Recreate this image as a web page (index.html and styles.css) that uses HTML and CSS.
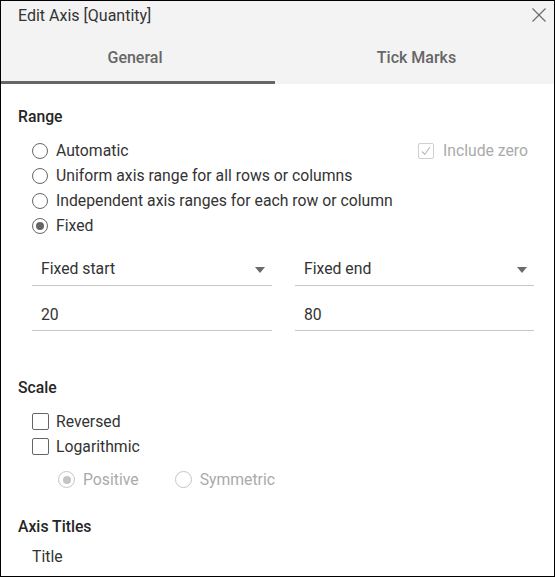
FILE: index.html
```html
<!DOCTYPE html>
<html>
<head>
<meta charset="utf-8">
<link rel="stylesheet" href="styles.css">
</head>
<body>
<div class="dialog">
  <div class="header">
    <div class="titlebar">
      <span class="title">Edit Axis [Quantity]</span>
      <svg class="close" width="14" height="14" viewBox="0 0 14 14"><path d="M0.5 0.5 L13.5 13.5 M13.5 0.5 L0.5 13.5" stroke="#6b6b6b" stroke-width="1.2" fill="none"/></svg>
    </div>
    <div class="tabs">
      <div class="tab active">General</div>
      <div class="tab second">Tick Marks</div>
    </div>
  </div>
  <div class="content">
    <div class="heading range-h">Range</div>
    <div class="range-top">
      <div class="options">
        <div class="opt"><span class="radio"></span>Automatic</div>
        <div class="opt"><span class="radio"></span>Uniform axis range for all rows or columns</div>
        <div class="opt"><span class="radio"></span>Independent axis ranges for each row or column</div>
        <div class="opt"><span class="radio checked"></span>Fixed</div>
      </div>
      <div class="include-zero">
        <span class="checkbox disabled"><svg width="12" height="12" viewBox="0 0 12 12"><path d="M2 6.5 L4.8 9.5 L10 2" stroke="#b8b8b8" stroke-width="1.1" fill="none"/></svg></span>Include zero
      </div>
    </div>
    <div class="fields">
      <div class="field select">Fixed start<span class="arrow"></span></div>
      <div class="field select">Fixed end<span class="arrow"></span></div>
      <div class="field input">20</div>
      <div class="field input">80</div>
    </div>
    <div class="heading scale-h">Scale</div>
    <div class="checks">
      <div class="opt"><span class="checkbox"></span>Reversed</div>
      <div class="opt"><span class="checkbox"></span>Logarithmic</div>
    </div>
    <div class="subopts">
      <div class="opt dis"><span class="radio checked dis"></span>Positive</div>
      <div class="opt dis"><span class="radio dis"></span>Symmetric</div>
    </div>
    <div class="heading axis-h">Axis Titles</div>
    <div class="sub-label">Title</div>
  </div>
</div>
</body>
</html>
```
FILE: styles.css
```css
html, body {
  margin: 0;
  padding: 0;
  background: #fff;
}
.dialog {
  width: 555px;
  height: 577px;
  box-sizing: border-box;
  border: 1px solid #000;
  overflow: hidden;
  font-family: Roboto, "Liberation Sans", sans-serif;
  font-size: 15.75px;
  color: #333;
}
.header {
  background: #f3f3f3;
}
.titlebar {
  height: 29px;
  display: flex;
  align-items: center;
  justify-content: space-between;
  padding: 0 8px 0 17px;
}
.title {
  font-size: 16px;
  color: #333;
  line-height: 20px;
}
.close {
  margin-top: -1px;
}
.tabs {
  display: flex;
  height: 54px;
}
.tab {
  text-align: center;
  font-size: 16px;
  font-weight: 500;
  color: #666;
  line-height: 20px;
  padding-top: 18px;
  box-sizing: border-box;
}
.tab.active {
  width: 274px;
  padding-right: 6px;
  border-bottom: 3px solid #666;
}
.tab.second {
  flex: 1;
  padding-left: 4px;
}
.content {
  padding: 0 26px 0 17px;
}
.heading {
  font-weight: 500;
  color: #262626;
  line-height: 20px;
}
.range-h {
  margin-top: 23px;
}
.range-top {
  display: flex;
  justify-content: space-between;
  margin-top: 11px;
}
.opt {
  display: flex;
  align-items: center;
  height: 25px;
  line-height: 25px;
}
.options {
  padding-left: 14px;
}
.radio {
  width: 14px;
  height: 14px;
  border: 1px solid #666;
  border-radius: 50%;
  margin-right: 8px;
  display: inline-flex;
  align-items: center;
  justify-content: center;
  flex: none;
  background: #fff;
}
.radio.checked::after {
  content: "";
  width: 8px;
  height: 8px;
  border-radius: 50%;
  background: #666;
}
.radio.dis {
  border-color: #c4c4c4;
}
.radio.checked.dis::after {
  background: #c4c4c4;
}
.opt.dis {
  color: #aaa;
}
.include-zero {
  display: flex;
  align-items: center;
  height: 25px;
  color: #aaa;
}
.checkbox {
  width: 14px;
  height: 14px;
  border: 1px solid #666;
  border-radius: 2px;
  margin-right: 8px;
  display: inline-flex;
  align-items: center;
  justify-content: center;
  flex: none;
}
.checkbox.disabled {
  border-color: #cfcfcf;
  margin-right: 9px;
}
.fields {
  display: grid;
  grid-template-columns: 240px 239px;
  column-gap: 23px;
  margin-left: 14px;
  margin-top: 14px;
}
.field {
  position: relative;
  border-bottom: 1px solid #c8c8c8;
  padding-left: 9px;
  box-sizing: border-box;
}
.select {
  height: 34px;
  line-height: 20px;
  padding-top: 7px;
}
.input {
  height: 45px;
  line-height: 20px;
  padding-top: 19px;
}
.arrow {
  position: absolute;
  right: 7px;
  top: 15px;
  width: 0;
  height: 0;
  border-left: 5px solid transparent;
  border-right: 5px solid transparent;
  border-top: 6px solid #6b6b6b;
}
.scale-h {
  margin-top: 47px;
}
.checks {
  padding-left: 14px;
  margin-top: 11px;
}
.checks .checkbox {
  width: 15px;
  height: 15px;
  margin-right: 7px;
}
.subopts {
  display: flex;
  padding-left: 40px;
  margin-top: 8px;
}
.subopts .opt {
  margin-right: 36px;
}
.subopts .radio {
  width: 15px;
  height: 15px;
}
.axis-h {
  margin-top: 25px;
}
.sub-label {
  padding-left: 14px;
  margin-top: 10px;
  line-height: 20px;
}
```
